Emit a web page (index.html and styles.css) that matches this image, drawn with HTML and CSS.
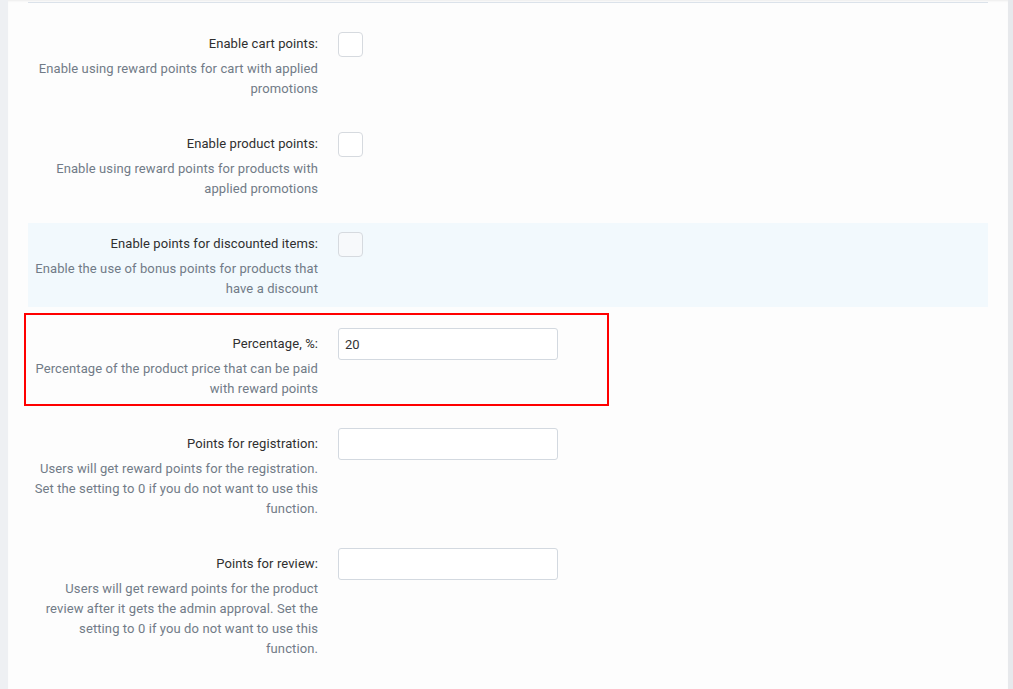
FILE: index.html
```html
<!DOCTYPE html>
<html lang="en">
<head>
    <meta charset="UTF-8">
    <title>Reward points settings</title>
    <link rel="stylesheet" href="styles.css">
</head>
<body>
    <div class="side side-left"></div>
    <div class="panel">
        <div class="panel-top"></div>

        <div class="setting">
            <div class="setting-label">
                <div class="title">Enable cart points:</div>
                <div class="desc">Enable using reward points for cart with applied promotions</div>
            </div>
            <div class="setting-control">
                <input type="checkbox" class="check">
            </div>
        </div>

        <div class="setting">
            <div class="setting-label">
                <div class="title">Enable product points:</div>
                <div class="desc">Enable using reward points for products with applied promotions</div>
            </div>
            <div class="setting-control">
                <input type="checkbox" class="check">
            </div>
        </div>

        <div class="setting setting-hover">
            <div class="setting-label">
                <div class="title">Enable points for discounted items:</div>
                <div class="desc">Enable the use of bonus points for products that have a discount</div>
            </div>
            <div class="setting-control">
                <input type="checkbox" class="check">
            </div>
        </div>

        <div class="setting">
            <div class="setting-label">
                <div class="title">Percentage, %:</div>
                <div class="desc">Percentage of the product price that can be paid with reward points</div>
            </div>
            <div class="setting-control">
                <input type="text" class="field" value="20">
            </div>
            <div class="marker"></div>
        </div>

        <div class="setting">
            <div class="setting-label">
                <div class="title">Points for registration:</div>
                <div class="desc">Users will get reward points for the registration. Set the setting to 0 if you do not want to use this function.</div>
            </div>
            <div class="setting-control">
                <input type="text" class="field">
            </div>
        </div>

        <div class="setting">
            <div class="setting-label">
                <div class="title">Points for review:</div>
                <div class="desc">Users will get reward points for the product review after it gets the admin approval. Set the setting to 0 if you do not want to use this function.</div>
            </div>
            <div class="setting-control">
                <input type="text" class="field">
            </div>
        </div>
    </div>
    <div class="side side-right"></div>
</body>
</html>
```

FILE: styles.css
```css
html, body {
    height: 100%;
}

body {
    margin: 0;
    display: flex;
    font-family: Roboto, "Liberation Sans", Arial, sans-serif;
    font-size: 13px;
    color: #333;
    background: #fff;
    overflow: hidden;
}

.side {
    flex: none;
    background: #eef0f3;
}

.side-left {
    width: 8px;
}

.side-right {
    width: 5px;
    background: #e7e9ec;
}

.panel {
    flex: 1;
    padding: 0 20px;
    background: #fdfdfd;
    box-shadow: inset 0 2px 2px -1px #ececec;
}

.panel-top {
    height: 2px;
    border-bottom: 1px solid #dbe2ea;
    margin-bottom: 20px;
}

.setting {
    position: relative;
    display: flex;
    gap: 20px;
    padding: 5px 0 8px;
    margin-bottom: 16px;
}

.setting-hover {
    background: #f2f9fd;
}

.setting-label {
    width: 290px;
    flex: none;
    text-align: right;
    letter-spacing: 0.1px;
}

.title {
    padding-top: 1px;
    line-height: 30px;
    color: #2f2f2f;
}

.desc {
    line-height: 20px;
    color: #717b87;
}

.setting-control {
    flex: none;
}

.check {
    appearance: none;
    -webkit-appearance: none;
    display: block;
    width: 25px;
    height: 25px;
    margin: 4px 0 0;
    border: 1px solid #d6dadf;
    border-radius: 4px;
    background: #fff;
    box-sizing: border-box;
}

.setting-hover .check {
    background: #f7f9fb;
}

.field {
    display: block;
    width: 220px;
    height: 32px;
    margin: 0;
    padding: 0 6px;
    border: 1px solid #d3d9e0;
    border-radius: 3px;
    background: #fff;
    box-sizing: border-box;
    font-family: inherit;
    font-size: 13px;
    color: #333;
}

.marker {
    position: absolute;
    top: -10px;
    left: -4px;
    width: 585px;
    height: 93px;
    border: 2px solid #f00;
    box-sizing: border-box;
    pointer-events: none;
}
```
